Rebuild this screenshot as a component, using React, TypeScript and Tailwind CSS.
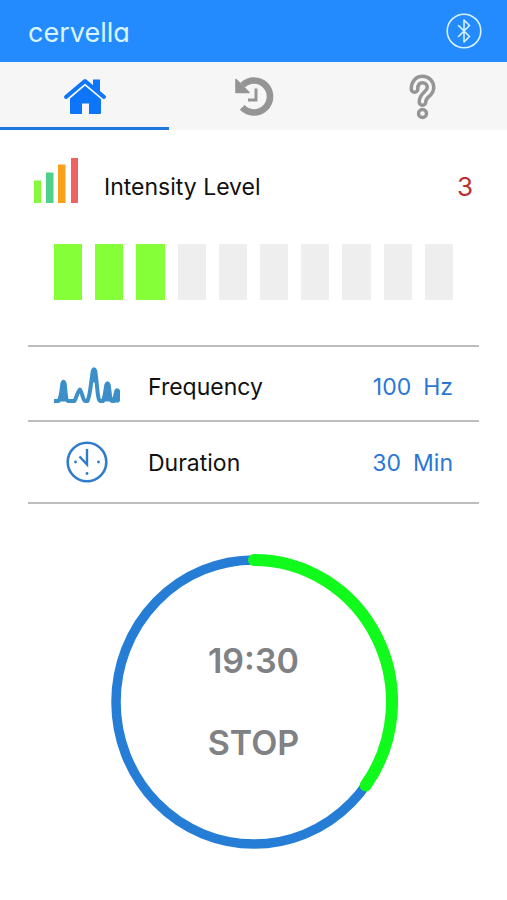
import React from 'react';

const LEVELS = 10;

const BluetoothIcon = () => (
  <svg viewBox="0 0 36 36" className="h-9 w-9" fill="none" stroke="#d8f1ff" strokeWidth="1.6">
    <circle cx="18" cy="18" r="16.8" />
    <path d="M12.5 12.5L23.5 23.5L18 29V7L23.5 12.5L12.5 23.5" strokeLinejoin="round" strokeLinecap="round" />
  </svg>
);

const HomeIcon = () => (
  <svg viewBox="0 0 44 38" className="h-[38px] w-11" fill="#0d75f8">
    <path d="M22 7.5L7 20.5V35q0 1 1 1H19V25.5h7V36H37q1 0 1 -1V20.5z" />
    <path d="M2.5 19.5L22 3L41.5 19.5" fill="none" stroke="#f6f6f7" strokeWidth="7" />
    <path d="M30 1.5h7v14l-7 -6z" />
    <path d="M3 19L22 3L41 19" fill="none" stroke="#0d75f8" strokeWidth="4" strokeLinejoin="round" strokeLinecap="round" />
  </svg>
);

const HistoryIcon = () => (
  <svg viewBox="0 0 42 42" className="h-[42px] w-[42px]" fill="none" stroke="#959595">
    <path d="M9.7 9.2A16 16 0 1 1 9.2 31.3" strokeWidth="6.6" />
    <path d="M3 3.5V16.5H16z" fill="#959595" strokeWidth="1.6" strokeLinejoin="round" />
    <path d="M23 12.5V24H15" strokeWidth="3" />
  </svg>
);

const HelpIcon = () => {
  const hook = 'M5.5 15C5.5 9 9 5.5 13.5 5.5C18 5.5 21.5 9 21.5 13.5C21.5 20.5 13.5 20 13.5 28';
  return (
    <svg viewBox="0 0 28 46" className="h-[46px] w-7" fill="none" strokeLinecap="round">
      <path d={hook} stroke="#959595" strokeWidth="10" />
      <path d={hook} stroke="#f6f6f7" strokeWidth="3" />
      <circle cx="13.5" cy="39.5" r="4" stroke="#959595" strokeWidth="3.4" fill="#f6f6f7" />
    </svg>
  );
};

const SignalIcon = () => (
  <svg viewBox="0 0 44 45" className="h-[45px] w-11">
    <rect x="0" y="22.5" width="7" height="22.5" fill="#86f83c" />
    <rect x="12" y="14.5" width="7.5" height="30.5" fill="#4fd18b" />
    <rect x="24" y="6.5" width="7.5" height="38.5" fill="#f9a11b" />
    <rect x="37" y="0" width="7" height="45" fill="#ee6262" />
  </svg>
);

const FrequencyIcon = () => (
  <svg viewBox="0 0 66 37" className="h-[37px] w-[66px]" fill="none" stroke="#3d8fc9" strokeLinejoin="round">
    <path
      d="M0 34H4.5C7 31 7.5 24 8.3 17Q9.5 12.5 10.7 17C11.5 24 12 34 14.5 34H20.5C22.5 31 23 25.5 25.8 22.5C28.5 25.5 29 34 31 34H33.5C36.5 28 37 14 38.8 4Q40 0.5 41.2 4C43 14 43.5 34 46 34H49C51 29 51.3 23 52.3 18Q53.5 14.5 54.7 18C55.7 24 56 34 58 34H59.5C61 31 61.3 27 62.3 24Q63.3 22 64.5 25V34"
      strokeWidth="4"
    />
    <path
      d="M5 34C8 30 8 22 9.5 17C11 22 11 30 14 34zM50 34C52 28 52 22 53.5 18C55 22 55 30 57 34zM60 35V30L63 24L65 26V35z"
      fill="#3d8fc9"
      strokeWidth="1"
    />
    <path d="M38 15L40 4L42 15z" fill="#3d8fc9" strokeWidth="1" />
  </svg>
);

const ClockIcon = () => (
  <svg viewBox="0 0 42 42" className="h-[42px] w-[42px]" fill="none" stroke="#2e7ccb">
    <circle cx="21" cy="21" r="19.3" strokeWidth="2.6" />
    <path d="M21 8V23.5L13.5 15.5" strokeWidth="2.4" />
    <g fill="#2e7ccb" stroke="none">
      <circle cx="9.5" cy="21" r="1.4" />
      <circle cx="32.5" cy="21" r="1.4" />
      <circle cx="21" cy="32.5" r="1.4" />
    </g>
  </svg>
);

const settings = [
  { label: 'Frequency', value: '100', unit: 'Hz', icon: <FrequencyIcon />, rowClass: 'h-[73px] pt-1' },
  { label: 'Duration', value: '30', unit: 'Min', icon: <ClockIcon />, rowClass: 'h-20' },
];

const tabs = [
  { name: 'Home', icon: <HomeIcon /> },
  { name: 'History', icon: <HistoryIcon /> },
  { name: 'Help', icon: <HelpIcon /> },
];

const TimerRing = ({ progress }: { progress: number }) => {
  const angle = progress * 2 * Math.PI;
  const endX = 144 + 138 * Math.sin(angle);
  const endY = 148 - 142 * Math.cos(angle);
  const large = progress > 0.5 ? 1 : 0;

  return (
    <svg viewBox="0 0 288 296" className="col-start-1 row-start-1 h-[296px] w-72" fill="none">
      <ellipse cx="144" cy="148" rx="138" ry="142" stroke="#257dd6" strokeWidth="9.5" />
      <path
        d={`M144 6A138 142 0 ${large} 1 ${endX} ${endY}`}
        stroke="#10fa1c"
        strokeWidth="12"
        strokeLinecap="round"
      />
    </svg>
  );
};

const App: React.FC = () => {
  const level = 3;

  return (
    <div className="min-h-screen bg-white font-['Inter','Liberation_Sans',sans-serif] text-[#111111]">
      <header className="flex h-[62px] items-center justify-between bg-[#248bff] pl-7 pr-[25px]">
        <h1 className="pt-1 text-[27px] leading-8 text-[#d8f5ff] [font-feature-settings:'cv11']">cervella</h1>
        <button type="button" aria-label="Bluetooth">
          <BluetoothIcon />
        </button>
      </header>

      <nav className="grid h-17 grid-cols-3 bg-[#f6f6f7]">
        {tabs.map((tab, i) => (
          <button
            key={tab.name}
            type="button"
            aria-label={tab.name}
            className={`flex items-center justify-center border-b-3 pt-1 ${i === 0 ? 'border-[#1f78dc]' : 'border-transparent'}`}
          >
            {tab.icon}
          </button>
        ))}
      </nav>

      <main>
        <section className="pt-7">
          <div className="flex items-center px-[34px]">
            <SignalIcon />
            <h2 className="ml-[26px] mt-3 flex-1 text-[23px] leading-7">Intensity Level</h2>
            <span className="mt-3 text-[26px] leading-7 text-[#b9302f]">3</span>
          </div>
          <div className="mt-[41px] flex gap-[13px] px-[54px]">
            {Array.from({ length: LEVELS }, (_, i) => (
              <div key={i} className={`h-14 flex-1 ${i < level ? 'bg-[#85ff38]' : 'bg-[#eeeeee]'}`} />
            ))}
          </div>
        </section>

        <section className="mx-7 mt-[45px] border-t-2 border-[#bdbdbd]">
          {settings.map((item) => (
            <div key={item.label} className="border-b-2 border-[#bdbdbd] px-[26px]">
              <div className={`flex items-center ${item.rowClass}`}>
                <div className="flex w-[66px] items-center justify-center">{item.icon}</div>
                <span className="ml-7 flex-1 pt-0.5 text-[23px] leading-7">{item.label}</span>
                <span className="flex gap-3 pt-0.5 text-[23px] leading-7 text-[#2b77d4]">
                  <span>{item.value}</span>
                  <span>{item.unit}</span>
                </span>
              </div>
            </div>
          ))}
        </section>

        <section className="mt-[50px] grid place-items-center">
          <TimerRing progress={0.35} />
          <div className="col-start-1 row-start-1 flex flex-col items-center gap-[42px] text-[34px] font-semibold leading-10 text-[#808184]">
            <span>19:30</span>
            <button type="button">STOP</button>
          </div>
        </section>
      </main>
    </div>
  );
};

export default App;
